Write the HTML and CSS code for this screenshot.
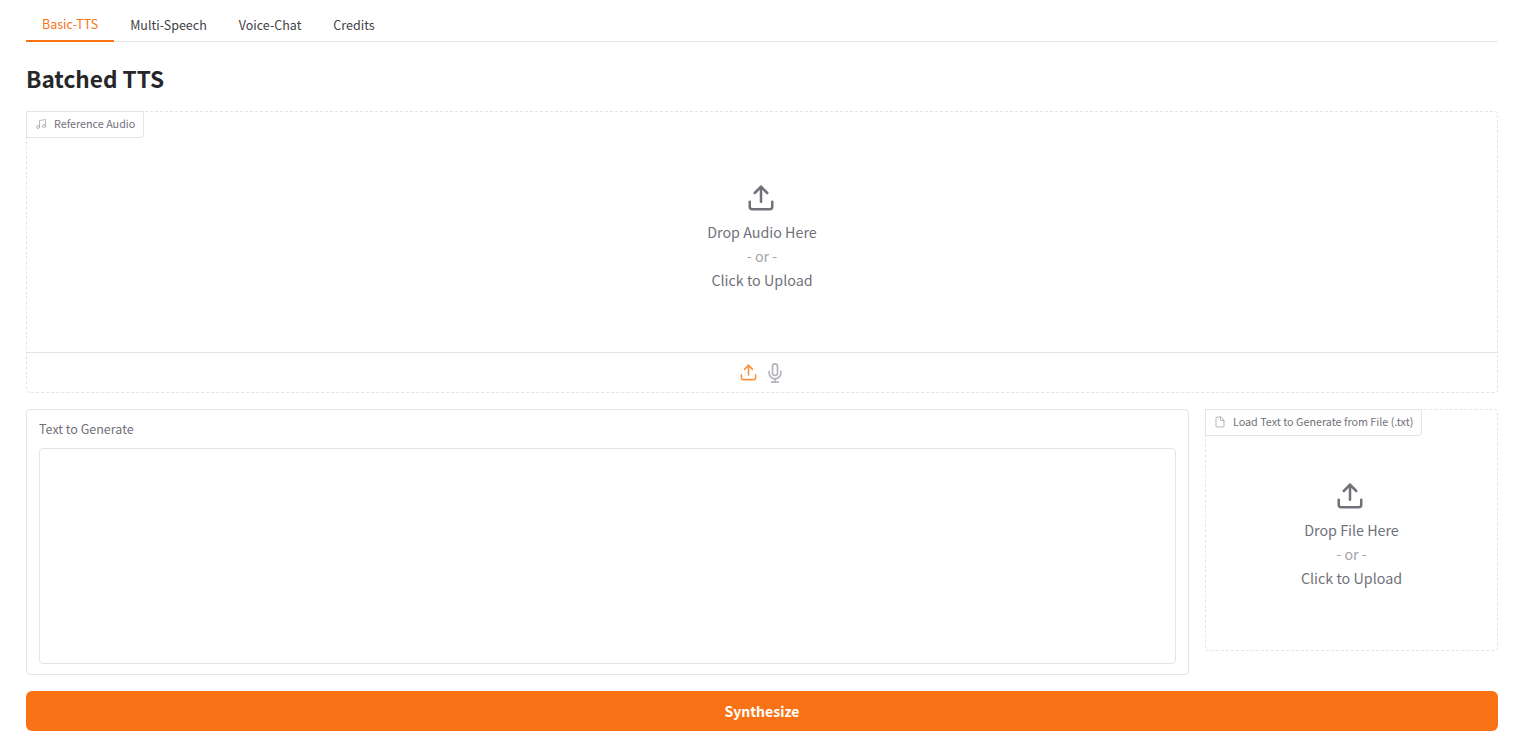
FILE: index.html
```html
<!DOCTYPE html>
<html lang="en">
<head>
    <meta charset="UTF-8">
    <title>Batched TTS</title>
    <link rel="stylesheet" href="styles.css">
</head>
<body>
    <div class="page">
        <nav class="tabs">
            <button class="tab tab-active">Basic-TTS</button>
            <button class="tab">Multi-Speech</button>
            <button class="tab">Voice-Chat</button>
            <button class="tab">Credits</button>
        </nav>

        <h1 class="title">Batched TTS</h1>

        <section class="drop-block audio-block">
            <div class="block-label">
                <svg class="label-icon" viewBox="0 0 24 24" fill="none" stroke="currentColor" stroke-width="1.5" stroke-linecap="round" stroke-linejoin="round"><path d="M9 18V5l12-2v13"/><circle cx="6" cy="18" r="3"/><circle cx="18" cy="16" r="3"/></svg>
                <span>Reference Audio</span>
            </div>
            <div class="drop-area audio-drop">
                <svg class="upload-icon" viewBox="0 0 24 24" fill="none" stroke="currentColor" stroke-width="2" stroke-linecap="round" stroke-linejoin="round"><path d="M21 15v4a2 2 0 0 1-2 2H5a2 2 0 0 1-2-2v-4"/><polyline points="17 8 12 3 7 8"/><line x1="12" y1="3" x2="12" y2="15"/></svg>
                <div class="drop-text">Drop Audio Here</div>
                <div class="drop-or">- or -</div>
                <div class="drop-text">Click to Upload</div>
            </div>
            <div class="source-bar">
                <svg class="source-upload" viewBox="0 0 24 24" fill="none" stroke="currentColor" stroke-width="2" stroke-linecap="round" stroke-linejoin="round"><path d="M21 15v4a2 2 0 0 1-2 2H5a2 2 0 0 1-2-2v-4"/><polyline points="17 8 12 3 7 8"/><line x1="12" y1="3" x2="12" y2="15"/></svg>
                <svg class="source-mic" viewBox="0 0 24 24" fill="none" stroke="currentColor" stroke-width="2" stroke-linecap="round" stroke-linejoin="round"><path d="M12 1a3 3 0 0 0-3 3v8a3 3 0 0 0 6 0V4a3 3 0 0 0-3-3z"/><path d="M19 10v2a7 7 0 0 1-14 0v-2"/><line x1="12" y1="19" x2="12" y2="23"/><line x1="8" y1="23" x2="16" y2="23"/></svg>
            </div>
        </section>

        <div class="input-row">
            <label class="text-block">
                <span class="text-label">Text to Generate</span>
                <textarea class="text-input"></textarea>
            </label>
            <section class="drop-block file-block">
                <div class="block-label">
                    <svg class="label-icon" viewBox="0 0 24 24" fill="none" stroke="currentColor" stroke-width="1.5" stroke-linecap="round" stroke-linejoin="round"><path d="M13 2H6a2 2 0 0 0-2 2v16a2 2 0 0 0 2 2h12a2 2 0 0 0 2-2V9z"/><polyline points="13 2 13 9 20 9"/></svg>
                    <span>Load Text to Generate from File (.txt)</span>
                </div>
                <div class="drop-area file-drop">
                    <svg class="upload-icon" viewBox="0 0 24 24" fill="none" stroke="currentColor" stroke-width="2" stroke-linecap="round" stroke-linejoin="round"><path d="M21 15v4a2 2 0 0 1-2 2H5a2 2 0 0 1-2-2v-4"/><polyline points="17 8 12 3 7 8"/><line x1="12" y1="3" x2="12" y2="15"/></svg>
                    <div class="drop-text">Drop File Here</div>
                    <div class="drop-or">- or -</div>
                    <div class="drop-text">Click to Upload</div>
                </div>
            </section>
        </div>

        <button class="submit">Synthesize</button>
    </div>
</body>
</html>
```

FILE: styles.css
```css
body{
    margin: 0;
    background: #fff;
    color: #27272a;
    font-family: "Noto Sans CJK SC", "Noto Sans", sans-serif;
}

.page{
    padding: 0 37px 0 26px;
}

.tabs{
    display: flex;
    height: 41px;
    border-bottom: 1px solid #e4e4e7;
}

.tab{
    padding: 8px 16px 0;
    height: 42px;
    border: none;
    background: none;
    color: #3f3f46;
    font-family: inherit;
    font-size: 12.5px;
    line-height: 20px;
}

.tab-active{
    color: #f97316;
    border-bottom: 2px solid #f97316;
}

.title{
    margin: 0;
    padding-top: 19px;
    height: 50px;
    font-size: 22.6px;
    line-height: 36px;
    font-weight: 600;
}

.drop-block{
    position: relative;
    box-sizing: border-box;
    border: 1px dashed #e4e4e7;
    border-radius: 4px;
}

.audio-block{
    height: 282px;
}

.block-label{
    position: absolute;
    top: -1px;
    left: -1px;
    display: flex;
    align-items: center;
    gap: 7px;
    height: 27px;
    box-sizing: border-box;
    padding: 0 8px 2px 8px;
    background: #fff;
    border: 1px solid #e4e4e7;
    border-radius: 0 0 4px 0;
    color: #71717a;
    font-size: 10.75px;
    line-height: 16px;
}

.label-icon{
    width: 12px;
    height: 12px;
    color: #a1a1aa;
}

.drop-area{
    display: flex;
    flex-direction: column;
    align-items: center;
    justify-content: center;
    box-sizing: border-box;
    height: 240px;
    padding-top: 10px;
    color: #71717a;
    font-size: 14.3px;
    line-height: 24px;
}

.upload-icon{
    width: 30px;
    height: 30px;
    margin: 0 3px 7px 0;
}

.drop-or{
    color: #a1a1aa;
}

.source-bar{
    display: flex;
    align-items: center;
    justify-content: center;
    gap: 7px;
    height: 40px;
    border-top: 1px solid #e4e4e7;
    box-sizing: border-box;
}

.source-upload{
    width: 19px;
    height: 19px;
    color: #fb923c;
}

.source-mic{
    width: 20px;
    height: 20px;
    color: #b4b4bc;
}

.input-row{
    display: flex;
    align-items: flex-start;
    gap: 16px;
    margin-top: 16px;
}

.text-block{
    display: block;
    flex: 1;
    box-sizing: border-box;
    height: 266px;
    padding: 11px 12px 12px;
    border: 1px solid #e4e4e7;
    border-radius: 4px;
}

.text-label{
    display: block;
    height: 27px;
    color: #71717a;
    font-size: 12.5px;
    line-height: 16px;
}

.text-input{
    display: block;
    box-sizing: border-box;
    width: 100%;
    height: 216px;
    border: 1px solid #e4e4e7;
    border-radius: 4px;
    resize: none;
    outline: none;
}

.file-block{
    flex: 0 0 293px;
    height: 242px;
}

.submit{
    display: block;
    width: 100%;
    height: 40px;
    margin-top: 16px;
    border: none;
    border-radius: 6px;
    background: #f97316;
    color: #fff;
    font-family: inherit;
    font-size: 14px;
    font-weight: 600;
}
```
